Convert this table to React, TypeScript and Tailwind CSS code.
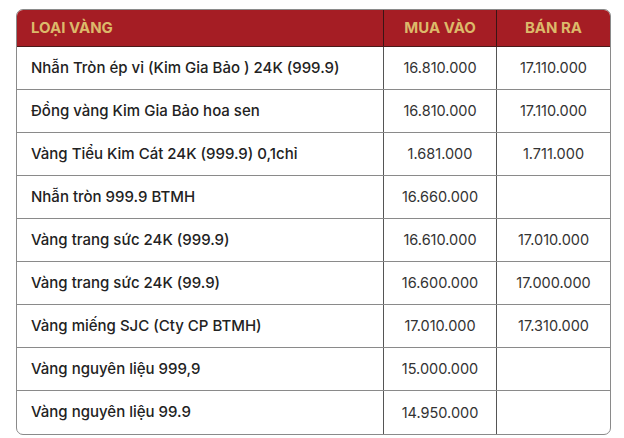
import React from "react"

interface GoldRow {
  name: string
  buy: string
  sell: string
}

const rows: GoldRow[] = [
  { name: "Nhẫn Tròn ép vỉ (Kim Gia Bảo ) 24K (999.9)", buy: "16.810.000", sell: "17.110.000" },
  { name: "Đồng vàng Kim Gia Bảo hoa sen", buy: "16.810.000", sell: "17.110.000" },
  { name: "Vàng Tiểu Kim Cát 24K (999.9) 0,1chỉ", buy: "1.681.000", sell: "1.711.000" },
  { name: "Nhẫn tròn 999.9 BTMH", buy: "16.660.000", sell: "" },
  { name: "Vàng trang sức 24K (999.9)", buy: "16.610.000", sell: "17.010.000" },
  { name: "Vàng trang sức 24K (99.9)", buy: "16.600.000", sell: "17.000.000" },
  { name: "Vàng miếng SJC (Cty CP BTMH)", buy: "17.010.000", sell: "17.310.000" },
  { name: "Vàng nguyên liệu 999,9", buy: "15.000.000", sell: "" },
  { name: "Vàng nguyên liệu 99.9", buy: "14.950.000", sell: "" },
]

export default function App() {
  return (
    <div className="bg-white w-[624px] h-[438px] pt-[9px] pl-[16px] font-['Inter','Noto_Sans',sans-serif]">
      <div className="w-[595px] rounded-[7px] border border-[#8a8a8a] overflow-hidden">
        <div className="flex h-[37px] bg-[#a51d24] text-[#dcb96a] text-[15px] font-bold border-b border-[#4a1a1a]">
          <div className="w-[366px] flex items-center pl-[14px]">LOẠI VÀNG</div>
          <div className="w-[113px] flex items-center justify-center border-l border-[#3a1515]">MUA VÀO</div>
          <div className="flex-1 flex items-center justify-center border-l border-[#3a1515]">BÁN RA</div>
        </div>
        {rows.map((row, i) => (
          <div
            key={row.name}
            className={`flex h-[43px] text-[#222] ${i < rows.length - 1 ? "border-b border-[#8a8a8a]" : ""}`}
          >
            <div className="w-[366px] flex items-center pl-[14px] text-[15px] font-medium">{row.name}</div>
            <div className="w-[113px] flex items-center justify-center border-l border-[#555] text-[14.5px] text-[#333]">{row.buy}</div>
            <div className="flex-1 flex items-center justify-center border-l border-[#555] text-[14.5px] text-[#333]">{row.sell}</div>
          </div>
        ))}
      </div>
    </div>
  )
}
